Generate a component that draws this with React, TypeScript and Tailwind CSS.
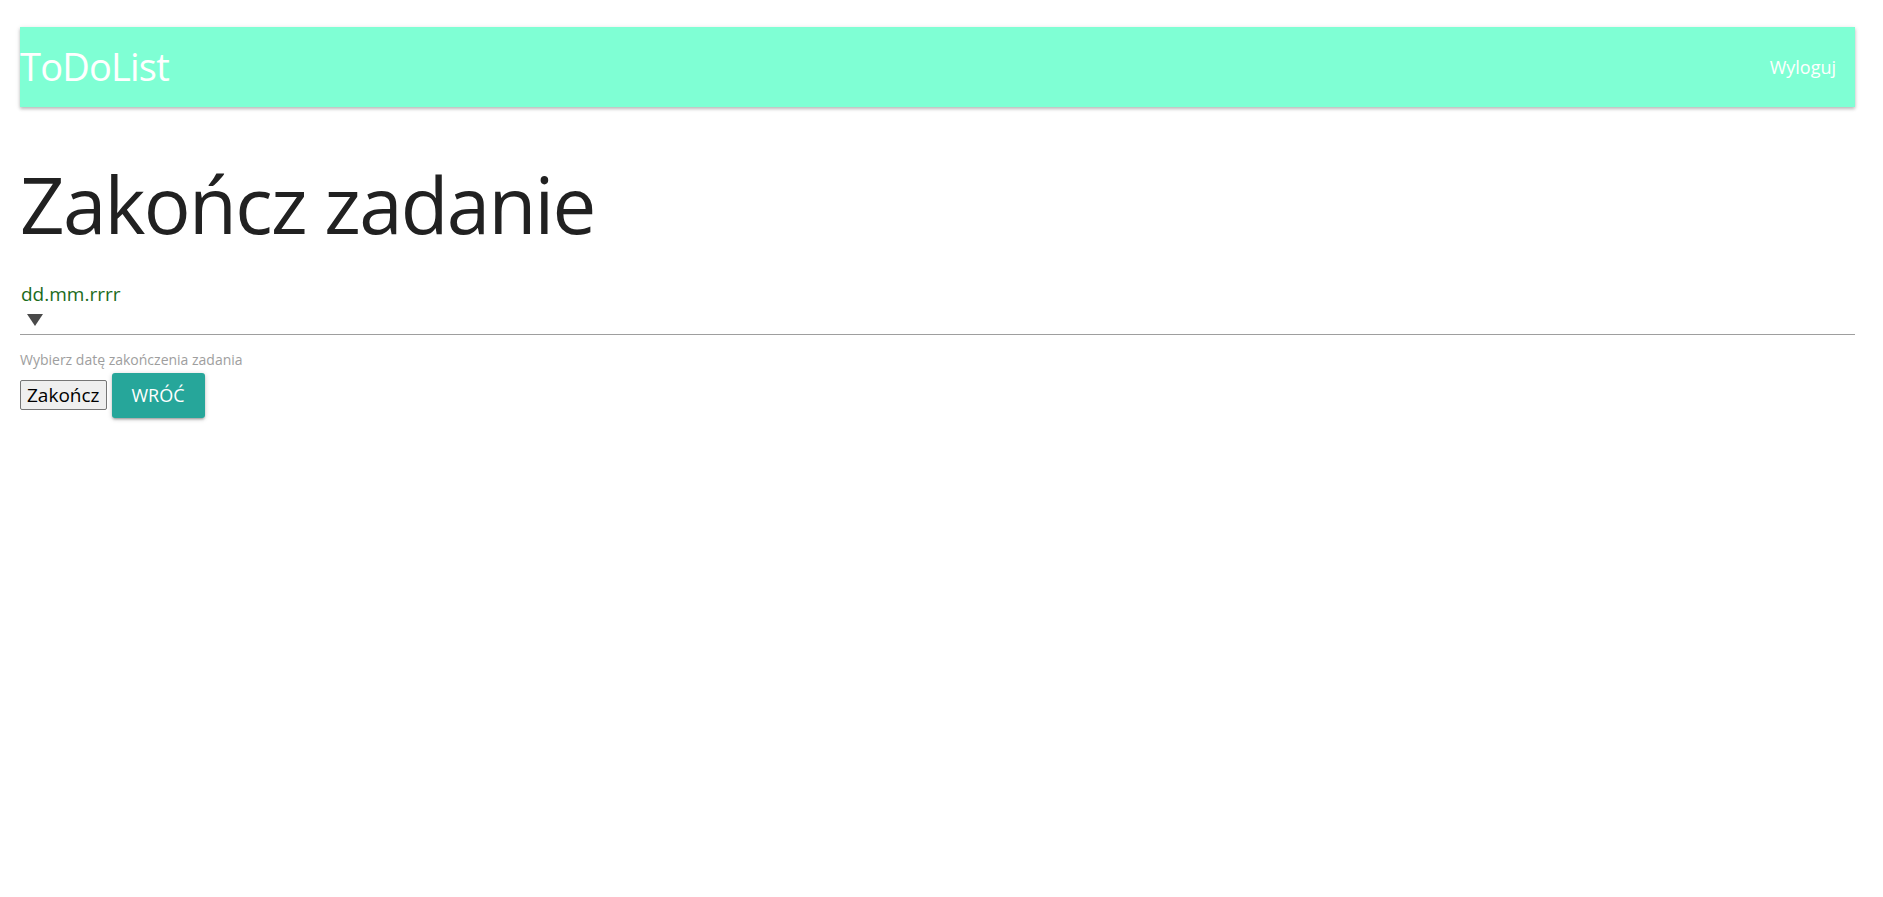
// App.tsx

const font = "font-['Segoe_UI','Open_Sans','Noto_Sans',sans-serif]";

function Navbar() {
	return (
		<nav className="h-[80px] bg-[#7fffd4] flex items-center justify-between shadow-[0_2px_3px_rgba(0,0,0,0.2),0_1px_5px_rgba(0,0,0,0.12)]">
			<a className="text-[38px] leading-none tracking-[-0.8px] text-white pb-[2px]">
				ToDoList
			</a>
			<a className="text-[18px] text-white pr-[19px]">Wyloguj</a>
		</nav>
	);
}

function DateField() {
	return (
		<div>
			<div className="border-b border-[#9e9e9e] pb-[8px]">
				<div className="text-[19px] leading-[22px] text-[#1b6b1b] pl-[1px]">
					dd.mm.rrrr
				</div>
				<div className="pl-[7px] pt-[9px] leading-none">
					<svg width="16" height="12" viewBox="0 0 16 12" className="block">
						<path d="M0 0 H16 L8 12 Z" fill="#4a4a4a" />
					</svg>
				</div>
			</div>
			<p className="text-[14px] text-[#9e9e9e] mt-[16px] leading-[18px]">
				Wybierz datę zakończenia zadania
			</p>
		</div>
	);
}

function App() {
	return (
		<div className={`${font} pl-5 pr-[28px] pt-[27px] min-h-screen bg-white`}>
			<Navbar />
			<main>
				<h1 className="text-[78px] leading-[1.1] tracking-[-1.7px] text-[#212121] mt-[55px] mb-[35px]">
					Zakończ zadanie
				</h1>
				<DateField />
				<div className="flex items-center gap-[5px] mt-[4px]">
					<button className="h-[30px] px-[6px] text-[19px] leading-none text-black bg-[#efefef] border border-[#767676] rounded-[2px]">
						Zakończ
					</button>
					<button className="h-[45px] w-[93px] bg-[#26a69a] text-white text-[18px] uppercase rounded-[3px] shadow-[0_2px_2px_rgba(0,0,0,0.14),0_3px_1px_-2px_rgba(0,0,0,0.12),0_1px_5px_rgba(0,0,0,0.2)]">
						Wróć
					</button>
				</div>
			</main>
		</div>
	);
}

export default App;
